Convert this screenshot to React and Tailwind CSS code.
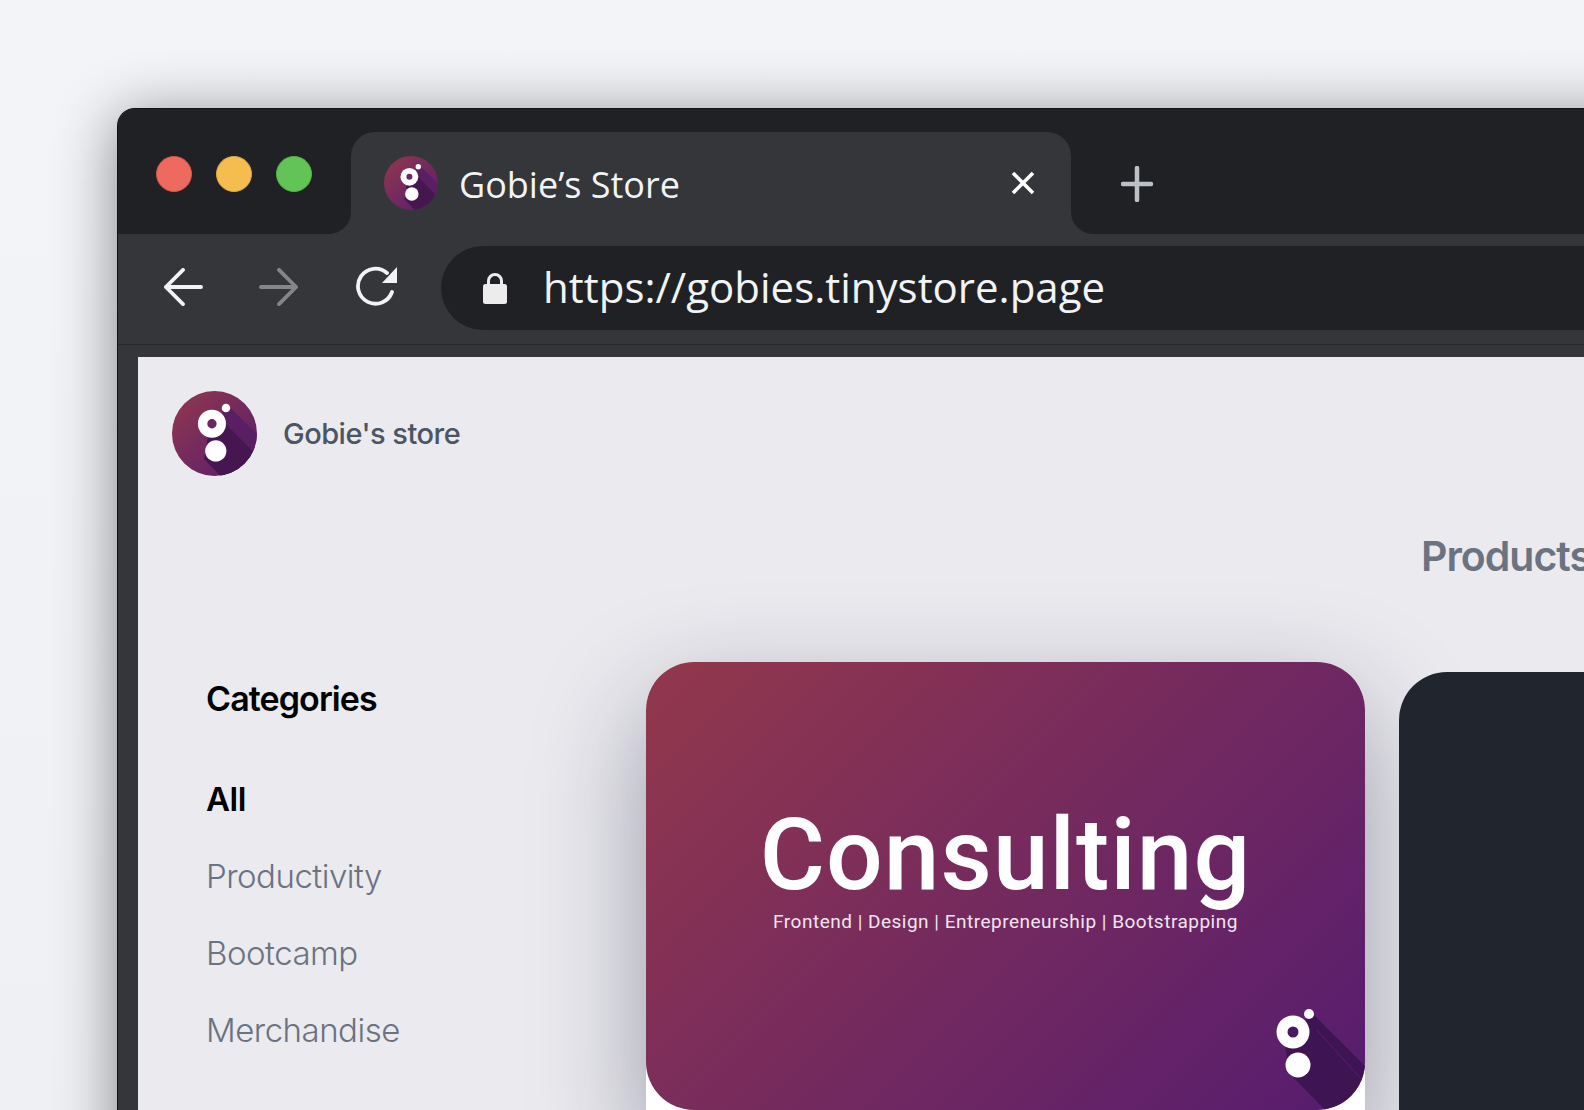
import React from "react";

const sans = "font-['Inter','Liberation_Sans',sans-serif]";
const chrome = "font-['Open_Sans','Liberation_Sans',sans-serif]";
const poster = "font-['Roboto','Liberation_Sans',sans-serif]";

// round store logo, 100 unit box
const Logo = ({ className, id }) => (
  <svg viewBox="0 0 100 100" className={className}>
    <defs>
      <linearGradient id={id} x1="0" y1="0" x2="1" y2="1">
        <stop offset="0" stopColor="#93384c" />
        <stop offset="1" stopColor="#551c70" />
      </linearGradient>
      <clipPath id={`${id}-clip`}>
        <circle cx="50" cy="50" r="50" />
      </clipPath>
    </defs>
    <circle cx="50" cy="50" r="50" fill={`url(#${id})`} />
    <g clipPath={`url(#${id}-clip)`}>
      <polygon points="66,17 105,56 105,105 62,105 38,80 42,55 56,30" fill="#5a1f62" />
      <polygon points="60,36 105,81 105,105 62,105 38,80 42,55" fill="#45164f" />
    </g>
    <circle cx="47" cy="38.5" r="16.5" fill="#fff" />
    <circle cx="47" cy="38.5" r="5.5" fill="#6f2560" />
    <circle cx="63.5" cy="20" r="5" fill="#fff" />
    <circle cx="51.5" cy="70.5" r="12.5" fill="#fff" />
  </svg>
);

const App = () => {
  const categories = ["Productivity", "Bootcamp", "Merchandise"];

  return (
    <div className="w-[1584px] h-[1110px] overflow-hidden bg-gradient-to-b from-[#f3f4f8] to-[#eff0f4] pt-[108px] pl-[117px]">
      <div className="w-[1600px] h-[1100px] rounded-tl-[18px] border-l border-t border-[#111214] bg-[#35363a] shadow-[0_8px_60px_rgba(0,0,0,0.45)] overflow-hidden">
        {/* tab strip */}
        <div className="flex h-[125px] bg-[#35363a]">
          <div className="w-[233px] bg-[#202124] rounded-br-[22px] flex items-start gap-6 pl-[38px] pt-[47px]">
            <span className="w-9 h-9 rounded-full bg-[#ee6a5f] border border-[#d5574d]" />
            <span className="w-9 h-9 rounded-full bg-[#f5bd4f] border border-[#dfa643]" />
            <span className="w-9 h-9 rounded-full bg-[#61c454] border border-[#58b04b]" />
          </div>
          <div className="w-[720px] bg-[#202124] pt-[23px]">
            <div className="h-[102px] bg-[#35363a] rounded-t-[24px] flex items-start pl-[33px] pt-6">
              <Logo id="tab-logo" className="w-[54px] h-[54px]" />
              <span className={`${chrome} ml-[21px] mt-[2px] text-[36px] leading-[54px] text-[#f1f3f4]`}>
                Gobie’s Store
              </span>
              <svg viewBox="0 0 24 24" className="w-6 h-6 ml-[331px] mt-[15px]" fill="none" stroke="#fff" strokeWidth="3.6">
                <path d="M2 2 L22 22 M22 2 L2 22" />
              </svg>
            </div>
          </div>
          <div className="flex-1 bg-[#202124] rounded-bl-[22px] pl-[50px] pt-[57px]">
            <svg viewBox="0 0 32 36" className="w-8 h-9" fill="none" stroke="#bdc1c6" strokeWidth="4.5" strokeLinecap="round">
              <path d="M16 2 V34 M2 18 H30" />
            </svg>
          </div>
        </div>

        {/* address bar */}
        <div className="flex items-start h-[111px] border-b border-[#26272a] pt-3 pl-[45px]">
          <svg viewBox="0 0 42 40" className="w-[40px] h-[38px] mt-[22px]" fill="none" stroke="#f1f3f4" strokeWidth="4" strokeLinecap="round" strokeLinejoin="round">
            <path d="M21 2 L3 20 L21 38 M3 20 H40" />
          </svg>
          <svg viewBox="0 0 42 40" className="w-[40px] h-[38px] mt-[22px] ml-[56px]" fill="none" stroke="#85868a" strokeWidth="4" strokeLinecap="round" strokeLinejoin="round">
            <path d="M21 2 L39 20 L21 38 M2 20 H39" />
          </svg>
          <svg viewBox="0 0 42 42" className="w-[42px] h-[42px] mt-[20px] ml-[57px]" fill="none">
            <path d="M36 26 A17.5 17.5 0 1 1 31 7" stroke="#f1f3f4" strokeWidth="3.8" strokeLinecap="round" />
            <path d="M41 1 V17 H26 Z" fill="#f1f3f4" />
          </svg>
          <div className="ml-[43px] flex-1 h-[84px] bg-[#202124] rounded-l-[42px] flex items-center pl-[42px]">
            <svg viewBox="0 0 24 32" className="w-6 h-8 -mt-[1px]">
              <path d="M5.5 13 V9 a6.5 6.5 0 0 1 13 0 V13" fill="none" stroke="#ececec" strokeWidth="3" />
              <rect x="0" y="12" width="24" height="20" rx="2.5" fill="#ececec" />
            </svg>
            <span className={`${chrome} ml-[36px] -mt-[2px] text-[42px] leading-none text-[#f1f3f4]`}>
              https://gobies.tinystore.page
            </span>
          </div>
        </div>

        {/* store page */}
        <div className="ml-[20px] mt-[12px] h-[760px] bg-[#eaeaef] pt-[34px] pl-[34px]">
          <div className="flex items-center h-[85px]">
            <Logo id="store-logo" className="w-[85px] h-[85px]" />
            <span className={`${sans} ml-[26px] text-[29px] font-medium tracking-[-0.5px] text-[#4b5563]`}>
              Gobie's store
            </span>
          </div>

          <div className={`${sans} pl-[1249px] mt-[55px] h-[50px] text-[41px] leading-[50px] font-semibold tracking-[-1px] text-[#6b7280]`}>
            Products
          </div>

          <div className="flex items-start mt-[81px]">
            <div className={`${sans} w-[474px] shrink-0 pl-[34px] pt-[17px]`}>
              <h3 className="text-[34px] leading-[40px] font-semibold tracking-[-0.9px] text-black">Categories</h3>
              <ul className="mt-[60px] flex flex-col gap-[37px] text-[33px] leading-[40px] tracking-[-0.5px] font-light text-[#6b7280]">
                <li className="font-semibold text-black">All</li>
                {categories.map((name) => (
                  <li key={name}>{name}</li>
                ))}
              </ul>
            </div>

            <div className="w-[719px] h-[460px] shrink-0 bg-white rounded-t-[48px] shadow-[0_40px_110px_rgba(30,25,50,0.38)]">
              <div className="relative h-[448px] rounded-[48px] overflow-hidden bg-[linear-gradient(135deg,#93384c,#561c70)] flex flex-col items-center pt-[137px]">
                <div className={`${poster} text-[100px] leading-[112px] font-medium tracking-[1px] text-white`}>
                  Consulting
                </div>
                <div className={`${poster} -mt-[2px] text-[19px] leading-[26px] tracking-[0.5px] text-[#f1e6ee]`}>
                  Frontend | Design | Entrepreneurship | Bootstrapping
                </div>
                <svg viewBox="0 0 125 130" className="absolute right-0 bottom-0 w-[125px] h-[130px]">
                  <polygon points="72,33 125,86 125,130 85,130 49,93 45,65" fill="#3e1552" />
                  <line x1="77" y1="50" x2="122" y2="100" stroke="#5a1f6e" strokeWidth="1" />
                  <circle cx="53" cy="52" r="16.5" fill="#fff" />
                  <circle cx="53" cy="52" r="5.5" fill="#4a1860" />
                  <circle cx="69" cy="34" r="5" fill="#fff" />
                  <circle cx="58" cy="85" r="12.5" fill="#fff" />
                </svg>
              </div>
            </div>

            <div className="ml-[34px] mt-[10px] w-[719px] h-[460px] shrink-0 rounded-t-[48px] bg-[#21252e]" />
          </div>
        </div>
      </div>
    </div>
  );
};

export default App;
